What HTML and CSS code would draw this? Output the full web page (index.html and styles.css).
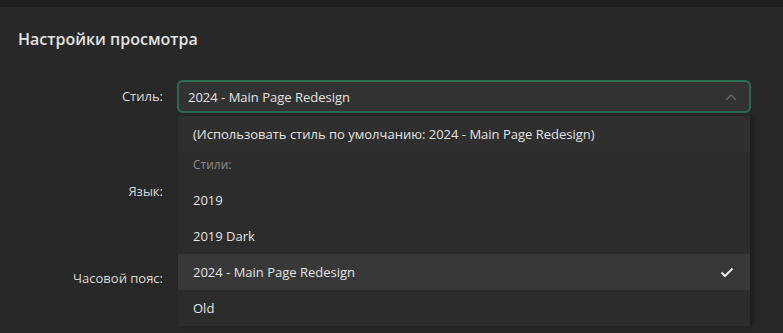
FILE: index.html
```html
<!DOCTYPE html>
<html lang="ru">
<head>
    <meta charset="UTF-8">
    <meta name="viewport" content="width=device-width, initial-scale=1.0">
    <title>Настройки просмотра</title>
    <link rel="stylesheet" href="styles.css">
</head>
<body>

    <div class="topbar"></div>

    <div class="container">
        <h2>Настройки просмотра</h2>

        <div class="form">
            <label class="label">Стиль:</label>
            <div class="field">
                <div class="select">
                    <span>2024 - Main Page Redesign</span>
                    <svg class="chevron" width="12" height="8" viewBox="0 0 12 8">
                        <polyline points="1,7 6,2 11,7" fill="none" stroke="#6a6a6a" stroke-width="1.3"/>
                    </svg>
                </div>

                <div class="menu">
                    <div class="option default">(Использовать стиль по умолчанию: 2024 - Main Page Redesign)</div>
                    <div class="group">Стили:</div>
                    <div class="option">2019</div>
                    <div class="option">2019 Dark</div>
                    <div class="option selected">
                        2024 - Main Page Redesign
                        <svg class="check" width="14" height="11" viewBox="0 0 14 11">
                            <polyline points="1.5,5.5 5,9 12.5,1.5" fill="none" stroke="#e8e8e8" stroke-width="2"/>
                        </svg>
                    </div>
                    <div class="option">Old</div>
                </div>
            </div>

            <label class="label row2">Язык:</label>
            <div class="field row2"></div>

            <label class="label row3">Часовой пояс:</label>
            <div class="field row3"></div>
        </div>
    </div>

</body>
</html>
```

FILE: styles.css
```css
body {
    font-family: "Open Sans", "Noto Sans", sans-serif;
    background-color: #282828;
    color: #e4e4e4;
    margin: 0;
    height: 333px;
    overflow: hidden;
}
.topbar {
    height: 7px;
    background: #1f1f1f;
}
.container {
    padding: 0 32px 0 18px;
}
h2 {
    font-size: 16px;
    font-weight: 600;
    color: #e2e2e2;
    margin: 0;
    padding-top: 20px;
    line-height: 24px;
}
.form {
    display: grid;
    grid-template-columns: 145px 1fr;
    column-gap: 14px;
    margin-top: 29px;
    font-size: 13px;
}
.label {
    text-align: right;
    color: #dadada;
    height: 33px;
    line-height: 33px;
}
.field {
    position: relative;
    height: 33px;
}
.row2 {
    margin-top: 62px;
}
.row3 {
    margin-top: 54px;
}
.select {
    box-sizing: border-box;
    height: 33px;
    border: 2px solid #2a6c51;
    border-radius: 6px;
    background: #323232;
    padding: 0 9px;
    display: flex;
    align-items: center;
    justify-content: space-between;
}
.chevron {
    margin-right: 3px;
}
.menu {
    position: absolute;
    top: 36px;
    left: 1px;
    right: 1px;
    background: #2c2c2c;
    box-shadow: 4px 0 4px rgba(0, 0, 0, 0.25);
}
.option {
    height: 36px;
    line-height: 36px;
    padding: 0 15px;
    color: #e4e4e4;
    display: flex;
    justify-content: space-between;
    align-items: center;
}
.option.default {
    background: #2f2f2f;
}
.option.selected {
    background: #383838;
}
.check {
    margin-right: 1px;
}
.group {
    height: 30px;
    line-height: 26px;
    padding: 0 15px;
    color: #8f8f8f;
    font-size: 12px;
}
```
